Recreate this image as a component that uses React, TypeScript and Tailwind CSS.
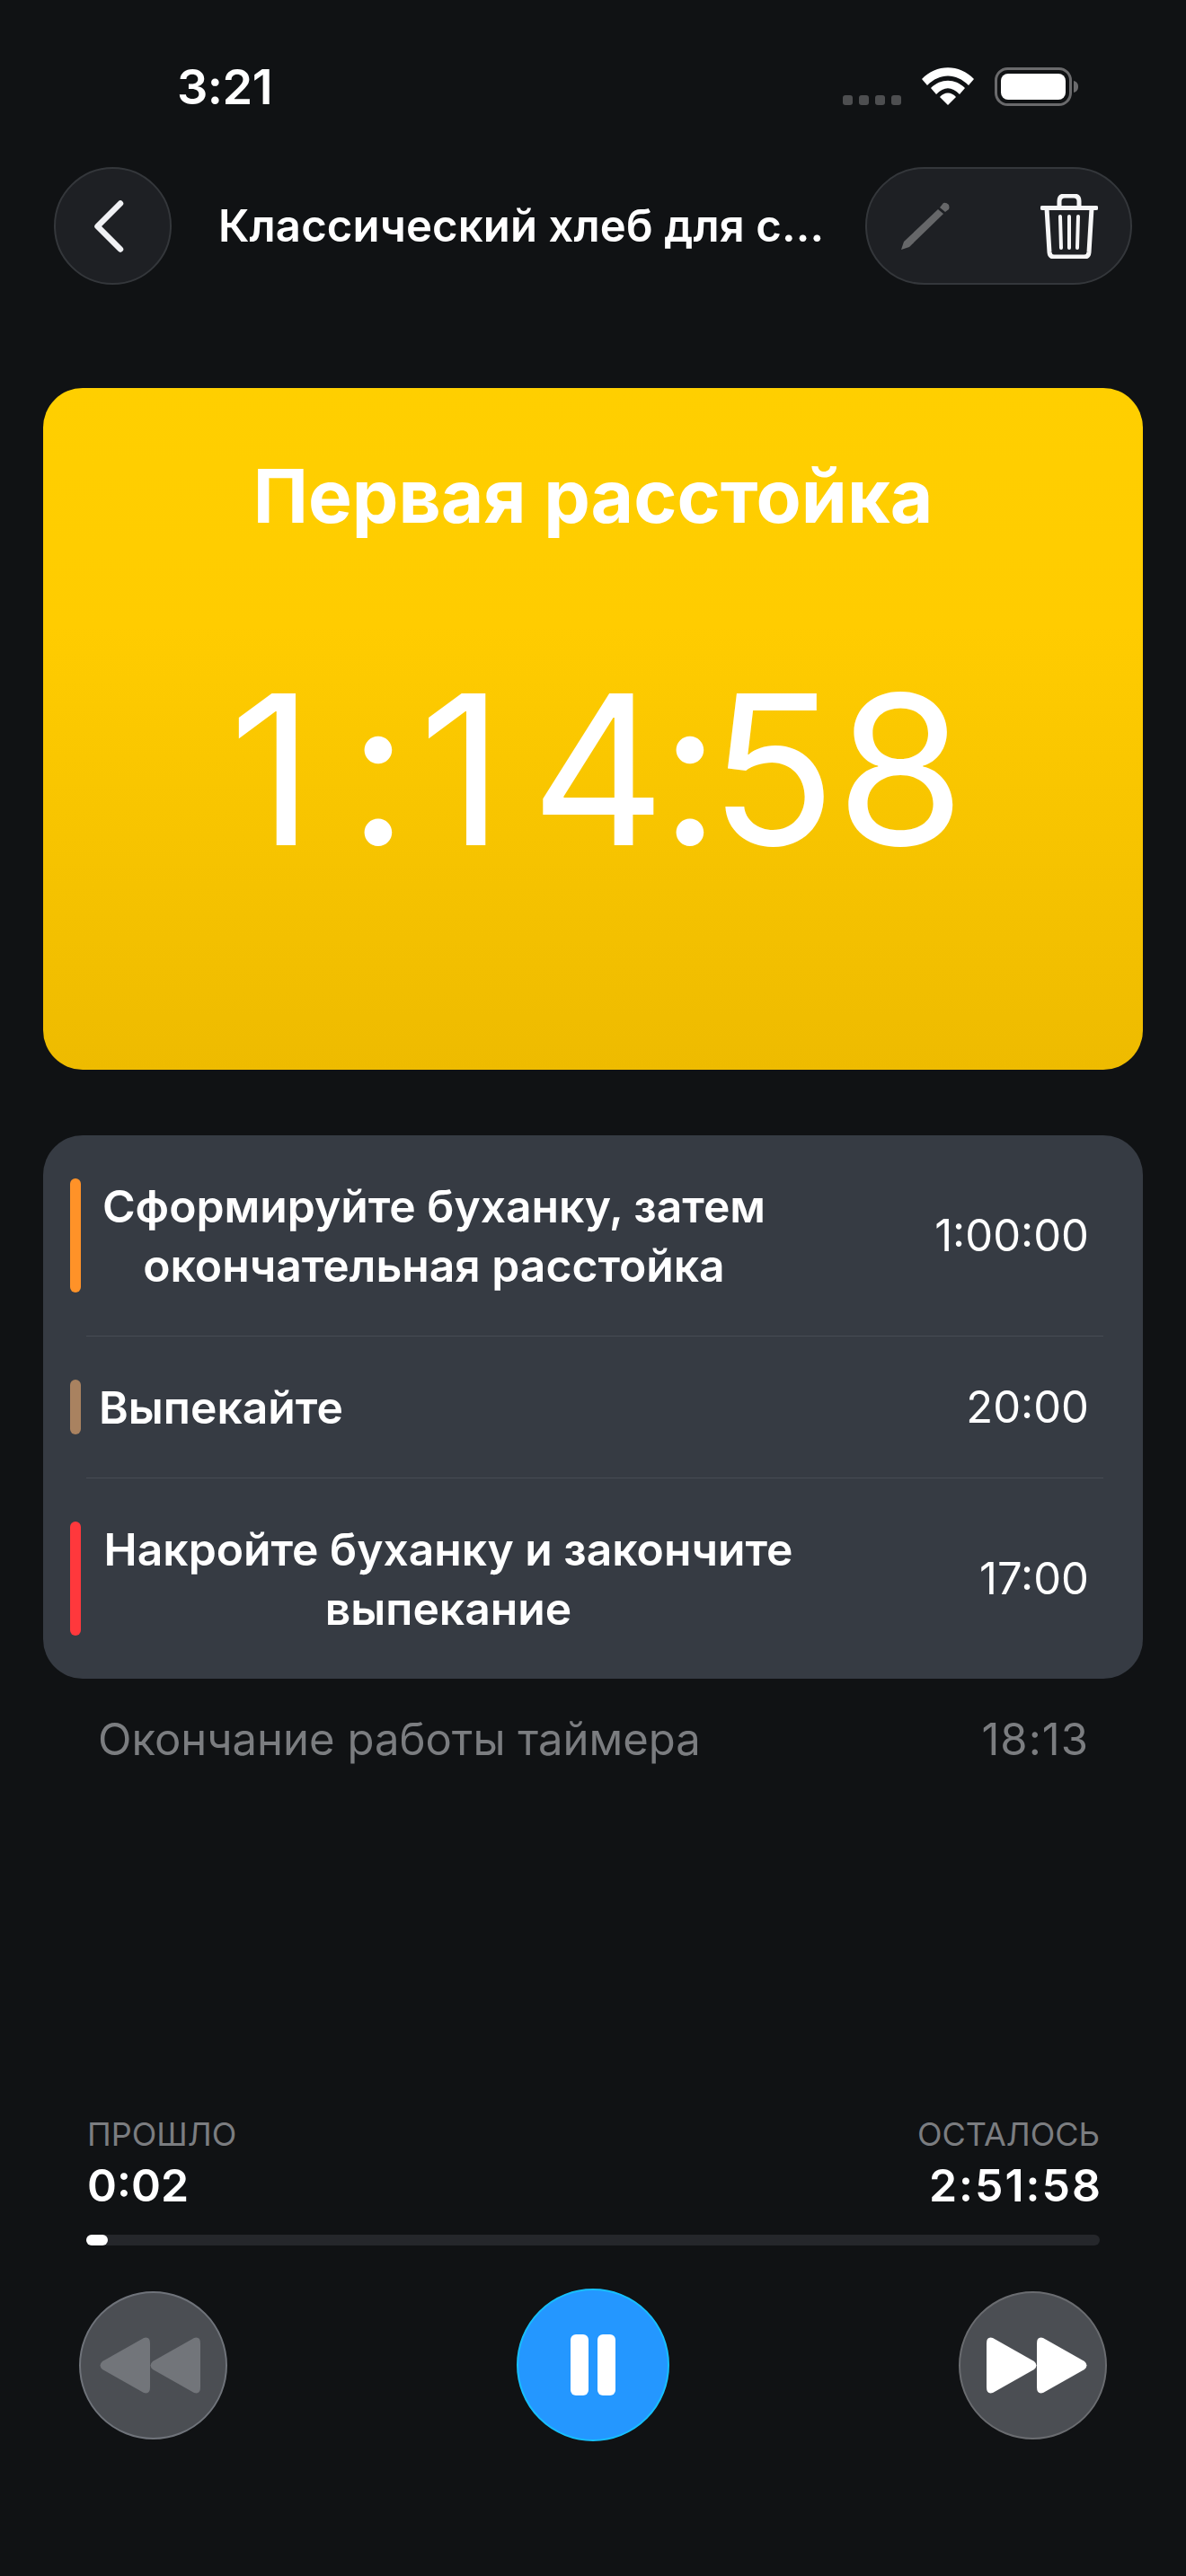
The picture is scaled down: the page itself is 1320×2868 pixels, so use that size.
export default function App() {
  return (
    <div className="w-[1320px] h-[2868px] bg-[#101214] flex flex-col text-white overflow-hidden font-['Inter',sans-serif]">
      <div className="h-[186px] shrink-0 flex items-start justify-between pl-[197px] pr-[120px] pt-[64px]">
        <div className="text-[54px] leading-[66px] font-semibold tracking-[-0.5px]">3:21</div>
        <div className="flex items-start gap-[23px] pt-[11px]">
          <div className="flex gap-[7px] pt-[31px]">
            <span className="w-[11px] h-[11px] rounded-[3px] bg-[#4d4e50]" />
            <span className="w-[11px] h-[11px] rounded-[3px] bg-[#4d4e50]" />
            <span className="w-[11px] h-[11px] rounded-[3px] bg-[#4d4e50]" />
            <span className="w-[11px] h-[11px] rounded-[3px] bg-[#4d4e50]" />
          </div>
          <svg width="58" height="42" viewBox="0 0 58 42" fill="#fff">
            <path d="M0 13 C16 -4 42 -4 58 13 L52 20 C38 6 20 6 6 20 Z" />
            <path d="M10 23 C21 12 37 12 48 23 L42 30 C33 21 25 21 16 30 Z" />
            <path d="M20 33 C25 27 33 27 38 33 L29 42 Z" />
          </svg>
          <svg width="93" height="43" viewBox="0 0 93 43">
            <rect x="1.5" y="1.5" width="83" height="40" rx="13" fill="none" stroke="#6a6a6c" strokeWidth="3" />
            <rect x="7" y="7" width="72" height="29" rx="8" fill="#fff" />
            <path d="M88 15 C92 16 93 19 93 21.5 C93 24 92 27 88 28 Z" fill="#6a6a6c" />
          </svg>
        </div>
      </div>

      <div className="h-[131px] shrink-0 flex items-center pl-[60px] pr-[60px]">
        <button className="w-[131px] h-[131px] rounded-full bg-[#1e2024] border-2 border-[#34373b] flex items-center justify-center shrink-0 pr-[9px]">
          <svg width="33" height="58" viewBox="0 0 33 58" fill="none" stroke="#f0f1f4" strokeWidth="6.5" strokeLinecap="round" strokeLinejoin="round">
            <path d="M29 3.5 L3.5 29 L29 54.5" />
          </svg>
        </button>
        <div className="flex-1 pl-[52px] text-[49px] leading-[60px] font-semibold whitespace-nowrap tracking-[0.15px]">Классический хлеб для с...</div>
        <div className="w-[297px] h-[131px] rounded-full bg-[#1e2024] border-2 border-[#34373b] flex items-center justify-between pl-[38px] pr-[36px] shrink-0">
          <svg width="54" height="54" viewBox="0 0 54 54">
            <path d="M0 53 L3 44 L41 8 L47 13 L9 50 Z" fill="#666769" />
            <path d="M43 6 L47 1 Q50 0 53 3 Q54 6 53 8 L49 11 Z" fill="#666769" />
          </svg>
          <svg width="64" height="72" viewBox="0 0 64 72" fill="none" stroke="#f6f6f7" strokeLinecap="round" strokeLinejoin="round">
            <path d="M2 15.5 H62" strokeWidth="5" />
            <path d="M7 16 L10 65 Q10.5 70 15 70 H49 Q53.5 70 54 65 L57 16" strokeWidth="5" />
            <path d="M21 14 V8 Q21 2 27 2 H37 Q43 2 43 8 V14" strokeWidth="5" />
            <path d="M22 25 L23 60 M32 25 V60 M42 25 L41 60" strokeWidth="4" />
          </svg>
        </div>
      </div>

      <div className="mt-[115px] mx-[48px] h-[759px] shrink-0 rounded-[44px] bg-gradient-to-b from-[#ffcf00] via-[#ffcc00] via-35% to-[#eebb00] flex flex-col items-center">
        <div className="mt-[72px] text-[82px] leading-[97px] font-bold">Первая расстойка</div>
        <div className="mt-[111px] ml-[9px] text-[232px] leading-[290px] font-normal whitespace-nowrap">
          <span className="tracking-[38px]">1</span>
          <span className="tracking-[12px]">:</span>
          <span className="tracking-[30px]">1</span>
          <span className="tracking-[-6px]">4</span>
          <span className="tracking-[-12px]">:</span>
          <span>58</span>
        </div>
      </div>

      <div className="mt-[73px] mx-[48px] h-[605px] shrink-0 rounded-[44px] bg-[#363b43] flex flex-col">
        <div className="flex items-center h-[223px] pl-[30px] pr-[60px]">
          <span className="w-[12px] h-[127px] rounded-full bg-[#ff9228] shrink-0" />
          <div className="w-[746px] ml-[20px] text-center text-[49.8px] leading-[66px] font-semibold">Сформируйте буханку, затем<br />окончательная расстойка</div>
          <div className="ml-auto text-[49px] leading-[60px]">1:00:00</div>
        </div>
        <div className="ml-[48px] mr-[44px] h-px bg-[#474c54]" />
        <div className="flex items-center h-[157px] pl-[30px] pr-[60px]">
          <span className="w-[12px] h-[61px] rounded-full bg-[#a98260] shrink-0" />
          <div className="ml-[20px] text-[49.8px] leading-[66px] font-semibold">Выпекайте</div>
          <div className="ml-auto text-[49px] leading-[60px]">20:00</div>
        </div>
        <div className="ml-[48px] mr-[44px] h-px bg-[#474c54]" />
        <div className="flex items-center h-[223px] pl-[30px] pr-[60px]">
          <span className="w-[12px] h-[127px] rounded-full bg-[#ff383c] shrink-0" />
          <div className="w-[778px] ml-[20px] text-center text-[49.8px] leading-[66px] font-semibold">Накройте буханку и закончите<br />выпекание</div>
          <div className="ml-auto text-[49px] leading-[60px]">17:00</div>
        </div>
      </div>

      <div className="mt-[38px] ml-[109px] mr-[108px] flex items-center justify-between text-[49px] leading-[60px] text-[#7b7d80] shrink-0">
        <div>Окончание работы таймера</div>
        <div className="tracking-[1px]">18:13</div>
      </div>

      <div className="mt-[387px] ml-[97px] mr-[96px] shrink-0 flex justify-between">
        <div>
          <div className="text-[36px] leading-[44px] text-[#7b7d80]">ПРОШЛО</div>
          <div className="mt-[5px] text-[50px] leading-[60px] font-semibold">0:02</div>
        </div>
        <div className="text-right">
          <div className="text-[36px] leading-[44px] text-[#7b7d80]">ОСТАЛОСЬ</div>
          <div className="mt-[5px] -mr-[3px] text-[50px] leading-[60px] font-semibold tracking-[2px]">2:51:58</div>
        </div>
      </div>

      <div className="mt-[25px] mx-[96px] h-[12px] rounded-full bg-[#25272b] shrink-0">
        <div className="w-[24px] h-[12px] rounded-full bg-white" />
      </div>

      <div className="mt-[48px] ml-[88px] mr-[88px] h-[170px] shrink-0 flex items-center justify-between">
        <button className="w-[165px] h-[165px] rounded-full bg-[#4b4e53] border-2 border-[#6f737a] flex items-center justify-center pr-[8px]">
          <svg width="112" height="63" viewBox="0 0 112 63" fill="#72757a">
            <path d="M56 7 Q56 -1 49 1 L3 27 Q-2 31.5 3 36 L49 62 Q56 64 56 56 Z" />
            <path d="M112 7 Q112 -1 105 1 L59 27 Q54 31.5 59 36 L105 62 Q112 64 112 56 Z" />
          </svg>
        </button>
        <button className="w-[170px] h-[170px] rounded-full bg-[#2497ff] border-2 border-[#16c0ff] flex items-center justify-center gap-[10px]">
          <span className="w-[20px] h-[68px] rounded-[6px] bg-white" />
          <span className="w-[20px] h-[68px] rounded-[6px] bg-white" />
        </button>
        <button className="w-[165px] h-[165px] rounded-full bg-[#4b4e53] border-2 border-[#6a6c70] flex items-center justify-center pl-[8px]">
          <svg width="112" height="63" viewBox="0 0 112 63" fill="#fff">
            <path d="M0 7 Q0 -1 7 1 L53 27 Q58 31.5 53 36 L7 62 Q0 64 0 56 Z" />
            <path d="M56 7 Q56 -1 63 1 L109 27 Q114 31.5 109 36 L63 62 Q56 64 56 56 Z" />
          </svg>
        </button>
      </div>
    </div>
  );
}
